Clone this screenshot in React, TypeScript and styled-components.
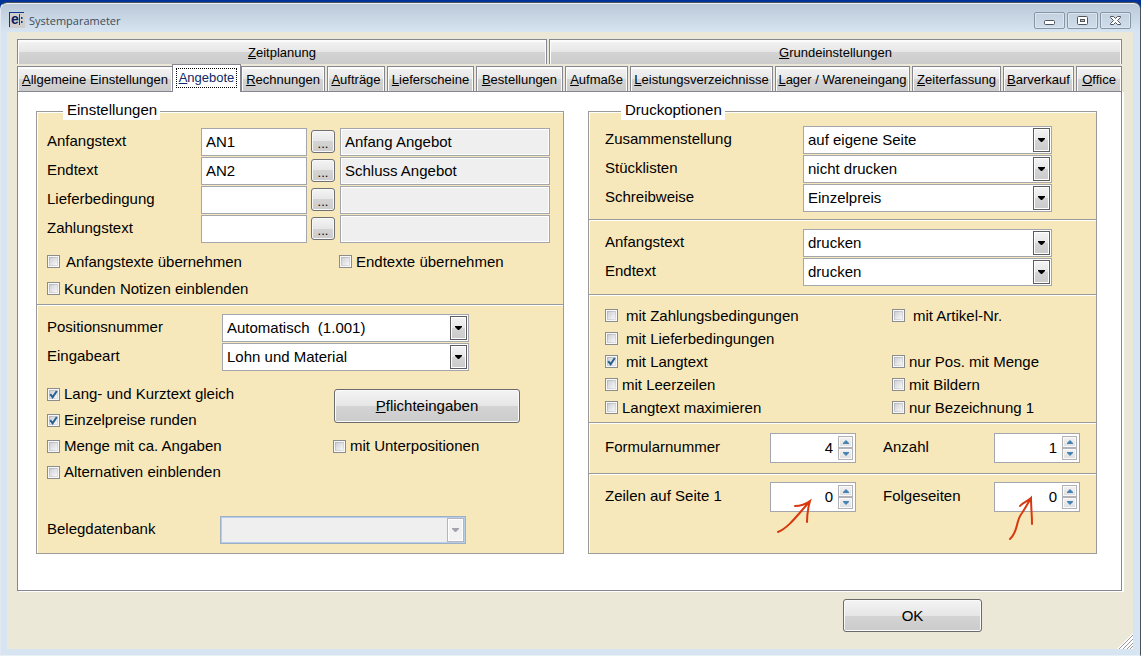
import React, { useId, useState } from "react";
import styled, { createGlobalStyle, css } from "styled-components";

const metal = "linear-gradient(#f4f4f4 0, #e6e6e6 50%, #d4d4d4 50%, #cbcbcb 100%)";
const line = "#a4a6ae";

const Global = createGlobalStyle`
  *, *::before, *::after { box-sizing: border-box; }
  body {
    margin: 0;
    background: #003399;
    color: #000;
    font-family: "Liberation Sans", Arial, sans-serif;
    font-size: 15px;
    line-height: 18px;
  }
  button, input, select { font: inherit; color: inherit; margin: 0; }
`;

/* ---------- window frame ---------- */

const Desktop = styled.div`
  min-height: 100vh;
  padding-top: 2px;
  display: flex;
  flex-direction: column;
`;

const Window = styled.main`
  flex: 1;
  display: flex;
  flex-direction: column;
  border: 1px solid #4b525a;
  border-left-color: #e3e9f2;
  border-bottom-color: #e9eff6;
  border-radius: 7px 7px 0 0;
  background: linear-gradient(#b9c8d8 0, #d7e4f1 29px);
  box-shadow: inset 0 1px 0 #e9f0f7;
  padding: 0 7px 6px 6px;
`;

const TitleBar = styled.header`
  height: 29px;
  display: flex;
  align-items: flex-start;
  padding: 9px 2px 0 2px;
`;

const Title = styled.h1`
  flex: 1;
  margin: 0 0 0 4px;
  font: 400 11px/18px "Open Sans", "Noto Sans", sans-serif;
  color: #3f4c57;
`;

const WindowButtons = styled.div`
  display: flex;
  gap: 2px;
`;

const WindowButton = styled.button`
  width: 31px;
  height: 17px;
  padding: 0;
  display: grid;
  place-items: center;
  border: 1px solid #8796a6;
  border-radius: 2px;
  background: linear-gradient(#c4d1df, #cfdceb);
  box-shadow: inset 0 0 0 1px #dbe6f1;
`;

const Client = styled.div`
  flex: 1;
  display: flex;
  flex-direction: column;
  padding: 7px 11px 0 10px;
  background: #ebe8d8;
  position: relative;
`;

/* ---------- tabs ---------- */

const TabRow = styled.div<{ $columns: string }>`
  display: grid;
  grid-template-columns: ${(p) => p.$columns};
  & + & { margin-top: 2px; }
`;

const Tab = styled.button<{ $last?: boolean; $active?: boolean }>`
  height: 25px;
  min-width: 0;
  margin-right: ${(p) => (p.$last ? 0 : 2)}px;
  padding: 2px 0 0;
  border: 1px solid #85868f;
  border-bottom: 0;
  background: ${metal};
  box-shadow: inset 1px 2px 0 #fbfbfb, inset -1px 0 0 #fbfbfb;
  font-size: 13px;
  line-height: 16px;
  white-space: nowrap;
  ${(p) =>
    p.$active &&
    css`
      height: 28px;
      margin: -2px 0 -1px -1px;
      padding: 0 0 2px;
      background: #fff;
      box-shadow: none;
      color: #0d2a66;
      position: relative;
      z-index: 1;
    `}
`;

const FocusRing = styled.span`
  display: inline-block;
  padding: 1px 2px;
  border: 1px dotted #000;
`;

const Page = styled.section`
  display: grid;
  grid-template-columns: 528fr 509fr;
  gap: 24px;
  padding: 11px 24px 36px 18px;
  border: 1px solid #85868f;
  background: #fff;
  box-shadow: 2px 1px 0 #fff;
`;

/* ---------- groups ---------- */

const Group = styled.fieldset`
  min-width: 0;
  margin: 0;
  padding: 0;
  border: 1px solid #9b9b9b;
  background: #f7e8bb;
  box-shadow: inset 1px 1px 0 #fff;
  display: flex;
  flex-direction: column;
`;

const Legend = styled.legend<{ $indent: number }>`
  margin-left: ${(p) => p.$indent}px;
  padding: 0 3px 0 4px;
  height: 17px;
  line-height: 14px;
  background: #fff;
`;

const Section = styled.div<{ $pad: string; $grow?: boolean }>`
  display: flex;
  flex-direction: column;
  gap: 1px;
  padding: ${(p) => p.$pad};
  flex: ${(p) => (p.$grow ? "1" : "none")};
  & + & {
    border-top: 1px solid #9b9b9b;
    box-shadow: inset 0 1px 0 #fff;
  }
`;

const Row = styled.div<{ $columns: string }>`
  display: grid;
  grid-template-columns: ${(p) => p.$columns};
  align-items: start;
`;

const Label = styled.label`
  line-height: 25px;
  white-space: nowrap;
`;

/* ---------- fields ---------- */

const TextBox = styled.input`
  width: 100%;
  height: 28px;
  padding: 0 4px 2px;
  border: 1px solid ${line};
  border-radius: 0;
  background: #fff;
  outline: none;
  &:read-only {
    background: #efefef;
    box-shadow: inset 0 0 0 1px #fff;
  }
`;

const MoreButton = styled.button`
  width: 24px;
  height: 23px;
  margin: 2px 4px 0;
  padding: 4px 0 0;
  border: 1px solid #6f7074;
  border-radius: 3px;
  background: ${metal};
  box-shadow: inset 0 0 0 1px #f8f8f8;
  font-size: 13px;
  line-height: 14px;
`;

const PushButton = styled.button`
  width: 100%;
  height: 34px;
  padding: 0;
  border: 1px solid #6b6b6b;
  border-radius: 3px;
  background: ${metal};
  box-shadow: inset 0 0 0 1px #fafafa;
`;

const SelectBox = styled.div`
  position: relative;
`;

const NativeSelect = styled.select`
  appearance: none;
  display: block;
  width: 100%;
  height: 28px;
  padding: 0 22px 0 4px;
  border: 1px solid ${line};
  border-radius: 0;
  background: #fff;
  outline: none;
  &:disabled {
    border-color: #9fb0c4;
    background: #efefef;
    box-shadow: inset 0 0 0 1px #b4cfec;
    opacity: 1;
  }
`;

const DropArrow = styled.span<{ $dim?: boolean }>`
  position: absolute;
  top: 2px;
  right: 2px;
  bottom: 2px;
  width: 17px;
  display: grid;
  place-items: center;
  pointer-events: none;
  border: 1px solid ${(p) => (p.$dim ? "#b5b5ba" : "#5c5c60")};
  background: ${(p) => (p.$dim ? "#f2f2f2" : metal)};
  box-shadow: inset 0 0 0 1px #fff;
  color: ${(p) => (p.$dim ? "#a3a3ab" : "#000")};
`;

const CheckLabel = styled.label<{ $gap: number; $height: number }>`
  display: flex;
  align-items: center;
  gap: ${(p) => p.$gap}px;
  height: ${(p) => p.$height}px;
  white-space: nowrap;
`;

const CheckMark = styled.span`
  display: grid;
  flex: none;
  & > * { grid-area: 1 / 1; }
  & > svg { visibility: hidden; pointer-events: none; }
  & > input:checked + svg { visibility: visible; }
`;

const CheckInput = styled.input`
  appearance: none;
  width: 13px;
  height: 13px;
  border: 1px solid #8b8c8c;
  background:
    linear-gradient(135deg, #cfd1d5, #f6f6f6) 2px 2px / 7px 7px no-repeat,
    linear-gradient(135deg, #b2b5ba, #e4e5e7) 1px 1px / 9px 9px no-repeat,
    #f8f8f8;
`;

const Spinner = styled.div`
  position: relative;
  display: flex;
  height: 30px;
  padding: 2px;
  border: 1px solid ${line};
  background: #fff;
`;

const SpinInput = styled.input`
  flex: 1;
  width: 0;
  height: 22px;
  padding: 0 5px 0 0;
  border: 0;
  background: none;
  outline: none;
  text-align: right;
`;

const SpinButtons = styled.div`
  display: grid;
  grid-template-rows: 12px 12px;
  width: 15px;
`;

const SpinButton = styled.button`
  display: grid;
  place-items: center;
  padding: 0;
  border: 1px solid #b0b2b8;
  background: linear-gradient(#f3f3f3, #dedede);
  box-shadow: inset 0 0 0 1px #fafafa;
`;

const CheckGrid = styled.div<{ $columns: string }>`
  display: grid;
  grid-template-columns: ${(p) => p.$columns};
`;

const ButtonCell = styled.div`
  grid-row: 1 / 3;
  grid-column: 2;
  align-self: center;
  max-width: 187px;
  padding: 0 0 2px 1px;
`;

const BottomRow = styled.div`
  margin-top: auto;
`;

const Blank = styled.span``;

const Footer = styled.footer`
  display: flex;
  justify-content: flex-end;
  padding: 8px 140px 0 0;
  & > button { width: 139px; height: 33px; }
`;

const Grip = styled.svg`
  position: absolute;
  right: 0;
  bottom: 0;
`;

const Pointer = styled.svg`
  position: absolute;
  top: 10px;
  left: 5px;
  overflow: visible;
  pointer-events: none;
`;

/* ---------- composed controls ---------- */

function Check({ text, on, gap = 4, height = 26 }: { text: string; on?: boolean; gap?: number; height?: number }) {
  return (
    <CheckLabel $gap={gap} $height={height}>
      <CheckMark>
        <CheckInput type="checkbox" defaultChecked={on} />
        <svg width="13" height="13" viewBox="0 0 13 13" fill="none" stroke="#28608f" strokeWidth="2">
          <path d="M3.2 6.2 L5.6 9.2 L9.8 3" />
        </svg>
      </CheckMark>
      {text}
    </CheckLabel>
  );
}

function Drop({ id, value, disabled }: { id: string; value: string; disabled?: boolean }) {
  return (
    <SelectBox>
      <NativeSelect id={id} disabled={disabled} defaultValue={value}>
        <option>{value}</option>
      </NativeSelect>
      <DropArrow $dim={disabled}>
        <svg width="7" height="4" viewBox="0 0 7 4" fill="currentColor">
          <path d="M0 0H7V1L4 4H3L0 1Z" />
        </svg>
      </DropArrow>
    </SelectBox>
  );
}

function DropRow({ label, value, columns, disabled }: { label: string; value: string; columns: string; disabled?: boolean }) {
  const id = useId();
  return (
    <Row $columns={columns}>
      <Label htmlFor={id}>{label}</Label>
      <Drop id={id} value={value} disabled={disabled} />
    </Row>
  );
}

function TextRow({ label, code, text }: { label: string; code: string; text: string }) {
  const id = useId();
  return (
    <Row $columns="154px 106px 33px minmax(0, 1fr)">
      <Label htmlFor={id}>{label}</Label>
      <TextBox id={id} defaultValue={code} />
      <MoreButton type="button" aria-label={`${label} auswählen`}>...</MoreButton>
      <TextBox readOnly value={text} aria-label={`${label} Bezeichnung`} />
    </Row>
  );
}

function Spin({ id, start, children }: { id: string; start: number; children?: React.ReactNode }) {
  const [value, setValue] = useState(start);
  return (
    <Spinner>
      <SpinInput
        id={id}
        inputMode="numeric"
        value={value}
        onChange={(e) => setValue(Number(e.target.value) || 0)}
      />
      <SpinButtons>
        <SpinButton type="button" aria-label="Erhöhen" onClick={() => setValue(value + 1)}>
          <svg width="6" height="4" viewBox="0 0 6 4" fill="#4584b4"><path d="M0 4V3L3 0L6 3V4Z" /></svg>
        </SpinButton>
        <SpinButton type="button" aria-label="Verringern" onClick={() => setValue(Math.max(0, value - 1))}>
          <svg width="6" height="4" viewBox="0 0 6 4" fill="#4584b4"><path d="M0 0V1L3 4L6 1V0Z" /></svg>
        </SpinButton>
      </SpinButtons>
      {children}
    </Spinner>
  );
}

const SpinLabel = styled(Label)`
  line-height: 28px;
`;

function SpinRow(p: { a: string; av: number; b: string; bv: number; aMark?: React.ReactNode; bMark?: React.ReactNode }) {
  const a = useId();
  const b = useId();
  return (
    <Row $columns="165px 86px 27px 111px 86px">
      <SpinLabel htmlFor={a}>{p.a}</SpinLabel>
      <Spin id={a} start={p.av}>{p.aMark}</Spin>
      <Blank />
      <SpinLabel htmlFor={b}>{p.b}</SpinLabel>
      <Spin id={b} start={p.bv}>{p.bMark}</Spin>
    </Row>
  );
}

const topTabs = ["Zeitplanung", "Grundeinstellungen"];
const tabs = [
  "Allgemeine Einstellungen", "Angebote", "Rechnungen", "Aufträge", "Lieferscheine", "Bestellungen",
  "Aufmaße", "Leistungsverzeichnisse", "Lager / Wareneingang", "Zeiterfassung", "Barverkauf", "Office",
];

function Mnemonic({ text }: { text: string }) {
  return <><u>{text[0]}</u>{text.slice(1)}</>;
}

const leftDrop = "175px minmax(0, 247px)";
const rightDrop = "198px minmax(0, 249px)";

export default function App() {
  return (
    <Desktop>
      <Global />
      <Window>
        <TitleBar>
          <svg width="16" height="16" viewBox="0 0 16 16">
            <rect width="16" height="16" fill="#d0cfcd" />
            <path d="M0 .5H15M.5 0V15" stroke="#0a3a8c" fill="none" />
            <text x="2" y="12" fontFamily="Liberation Sans, Arial, sans-serif" fontWeight="700" fontSize="14" fill="#0b1f5c">e</text>
            <path d="M10.500 2V13" stroke="#0a3a8c" />
            <path d="M12 5h1.500v2H12zM12 9h1.500v2H12z" fill="#0a3a8c" />
          </svg>
          <Title>Systemparameter</Title>
          <WindowButtons>
            <WindowButton type="button" aria-label="Minimieren">
              <svg width="13" height="11" viewBox="0 0 13 11"><rect x="1.500" y="5.500" width="10" height="4" rx="1" fill="#fff" stroke="#50555c" /></svg>
            </WindowButton>
            <WindowButton type="button" aria-label="Maximieren">
              <svg width="13" height="11" viewBox="0 0 13 11" stroke="#50555c">
                <rect x="1.500" y="1.500" width="10" height="8" rx="1" fill="#fff" />
                <rect x="4.500" y="4.500" width="4" height="2" fill="#b9c6d4" />
              </svg>
            </WindowButton>
            <WindowButton type="button" aria-label="Schließen">
              <svg width="13" height="11" viewBox="0 0 13 11" fill="#fff" stroke="#50555c">
                <path d="M1.500 1.500H4.500L6.500 3.500L8.500 1.500H11.500V2.500L8.500 5.500L11.500 8.500V9.500H8.500L6.500 7.500L4.500 9.500H1.500V8.500L4.500 5.500L1.500 2.500Z" />
              </svg>
            </WindowButton>
          </WindowButtons>
        </TitleBar>
        <Client>
          <TabRow $columns="532fr 573fr" role="tablist">
            {topTabs.map((t, i) => (
              <Tab key={t} type="button" role="tab" $last={i === 1}><Mnemonic text={t} /></Tab>
            ))}
          </TabRow>
          <TabRow
            $columns="156fr 68fr 86fr 60fr 89fr 89fr 65fr 145fr 137fr 91fr 73fr 46fr"
            role="tablist"
          >
            {tabs.map((t, i) => (
              <Tab key={t} type="button" role="tab" aria-selected={i === 1} $active={i === 1} $last={i === 0 || i === tabs.length - 1}>
                {i === 1 ? <FocusRing><Mnemonic text={t} /></FocusRing> : <Mnemonic text={t} />}
              </Tab>
            ))}
          </TabRow>
          <Page>
            <Group>
              <Legend $indent={26}>Einstellungen</Legend>
              <Section $pad="8px 13px 2px 10px">
                <TextRow label="Anfangstext" code="AN1" text="Anfang Angebot" />
                <TextRow label="Endtext" code="AN2" text="Schluss Angebot" />
                <TextRow label="Lieferbedingung" code="" text="" />
                <TextRow label="Zahlungstext" code="" text="" />
                <Section $pad="4px 0 0">
                  <CheckGrid $columns="292px 1fr">
                    <Check text="Anfangstexte übernehmen" gap={6} height={27} />
                    <Check text="Endtexte übernehmen" height={27} />
                    <Check text="Kunden Notizen einblenden" height={27} />
                  </CheckGrid>
                </Section>
              </Section>
              <Section $pad="9px 13px 9px 10px" $grow>
                <DropRow label="Positionsnummer" value="Automatisch&nbsp; (1.001)" columns={leftDrop} />
                <DropRow label="Eingabeart" value="Lohn und Material" columns={leftDrop} />
                <Section $pad="9px 0 20px">
                  <CheckGrid $columns="286px 1fr">
                    <Check text="Lang- und Kurztext gleich" on />
                    <ButtonCell>
                      <PushButton type="button"><Mnemonic text="Pflichteingaben" /></PushButton>
                    </ButtonCell>
                    <Check text="Einzelpreise runden" on />
                    <Check text="Menge mit ca. Angaben" />
                    <Check text="mit Unterpositionen" />
                    <Check text="Alternativen einblenden" />
                  </CheckGrid>
                </Section>
                <BottomRow>
                  <DropRow label="Belegdatenbank" value="" columns="173px minmax(0, 246px)" disabled />
                </BottomRow>
              </Section>
            </Group>
            <Group>
              <Legend $indent={32}>Druckoptionen</Legend>
              <Section $pad="6px 16px 7px">
                <DropRow label="Zusammenstellung" value="auf eigene Seite" columns={rightDrop} />
                <DropRow label="Stücklisten" value="nicht drucken" columns={rightDrop} />
                <DropRow label="Schreibweise" value="Einzelpreis" columns={rightDrop} />
              </Section>
              <Section $pad="9px 16px 8px">
                <DropRow label="Anfangstext" value="drucken" columns={rightDrop} />
                <DropRow label="Endtext" value="drucken" columns={rightDrop} />
              </Section>
              <Section $pad="9px 16px 3px">
                <CheckGrid $columns="287px 1fr">
                  <Check text="mit Zahlungsbedingungen" gap={8} height={23} />
                  <Check text="mit Artikel-Nr." gap={8} height={23} />
                  <Check text="mit Lieferbedingungen" gap={8} height={23} />
                  <Blank />
                  <Check text="mit Langtext" gap={8} height={23} on />
                  <Check text="nur Pos. mit Menge" height={23} />
                  <Check text="mit Leerzeilen" height={23} />
                  <Check text="mit Bildern" height={23} />
                  <Check text="Langtext maximieren" height={23} />
                  <Check text="nur Bezeichnung 1" height={23} />
                </CheckGrid>
              </Section>
              <Section $pad="10px 16px 10px">
                <SpinRow a="Formularnummer" av={4} b="Anzahl" bv={1} />
              </Section>
              <Section $pad="8px 16px 41px" $grow>
                <SpinRow
                  a="Zeilen auf Seite 1"
                  av={0}
                  b="Folgeseiten"
                  bv={0}
                  aMark={
                    <Pointer width="40" height="45" fill="none" stroke="#d8380e" strokeWidth="2" strokeLinecap="round">
                      <path d="M2 39C12 35 20 24 34 8M19 13C26 13 30 11 34 8C32 15 31 22 31 29" />
                    </Pointer>
                  }
                  bMark={
                    <Pointer width="40" height="50" fill="none" stroke="#d8380e" strokeWidth="2" strokeLinecap="round">
                      <path d="M10 46C19 37 15 29 22 20C26 14 28 10 31 5M20 13C23 9 27 9 31 5C31 14 32 22 32 31" />
                    </Pointer>
                  }
                />
              </Section>
            </Group>
          </Page>
          <Footer>
            <PushButton type="button">OK</PushButton>
          </Footer>
          <Grip width="16" height="16" viewBox="0 0 16 16" stroke="#98999c" strokeWidth="1">
            <path d="M0 16L16 0V16Z" fill="#fff" stroke="none" />
            <path d="M2 16L16 2M6 16L16 6M10 16L16 10M13 16L16 13" />
          </Grip>
        </Client>
      </Window>
    </Desktop>
  );
}
